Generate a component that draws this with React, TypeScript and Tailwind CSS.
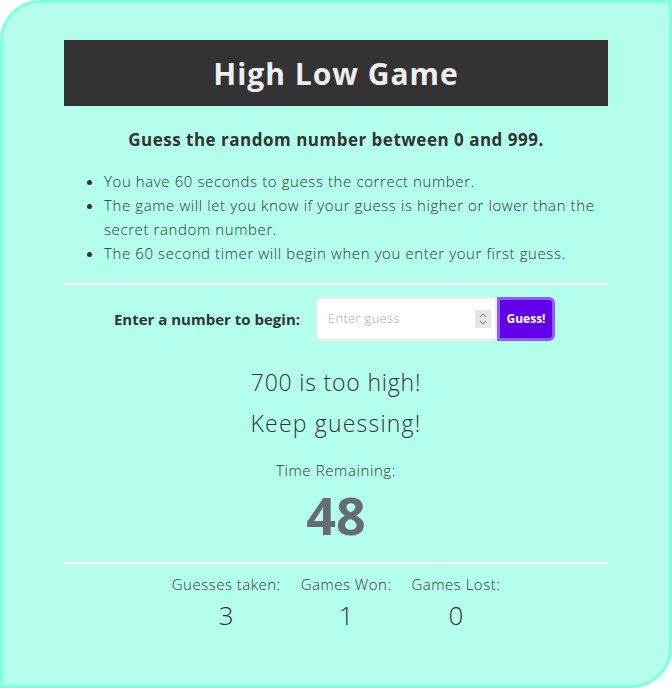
import React from 'react';

const stats = [
  { label: 'Guesses taken:', value: '3' },
  { label: 'Games Won:', value: '1' },
  { label: 'Games Lost:', value: '0' },
];

export default function App() {
  return (
    <div
      className="w-[672px] h-[688px] bg-[#b3ffec] border-[3px] border-[#80ffdf] rounded-tl-[40px] rounded-br-[40px] text-[#333333] pt-[37px]"
      style={{ fontFamily: '"Open Sans", Lato, sans-serif' }}
    >
      <div className="w-[544px] ml-[61px]">
        {/* Header */}
        <div className="h-[66px] bg-[#333333] flex items-center justify-center">
          <h1 className="text-[30px] font-bold tracking-[1px] text-[#eeeeee]">High Low Game</h1>
        </div>

        <p className="mt-[22px] text-center text-[17px] font-bold tracking-[0.5px] leading-[24px]">
          Guess the random number between 0 and 999.
        </p>

        <ul className="mt-[17px] pl-[40px] pr-[4px] list-disc text-[15px] tracking-[0.6px] leading-[24px] font-light">
          <li>You have 60 seconds to guess the correct number.</li>
          <li>The game will let you know if your guess is higher or lower than the secret random number.</li>
          <li>The 60 second timer will begin when you enter your first guess.</li>
        </ul>

        <div className="mt-[18px] h-[2px] bg-white" />

        {/* Input row */}
        <div className="mt-[12px] flex items-center justify-center">
          <label className="text-[15px] font-bold mr-[16px] ml-[-3px]">Enter a number to begin:</label>
          <div className="flex h-[44px]">
            <div className="w-[181px] bg-white border-2 border-[#eeeeee] rounded-l-[6px] flex items-center pl-[10px] pr-[4px]">
              <span className="flex-1 text-[13px] text-[#aaaaaa] font-light tracking-[0.3px]">Enter guess</span>
              <div className="w-[16px] h-[18px] bg-[#e6e6ea] flex items-center justify-center">
                <svg width="10" height="14" viewBox="0 0 10 14" fill="none" stroke="#9a9aa2" strokeWidth="1.2">
                  <path d="M2 5 L5 2 L8 5" />
                  <path d="M2 9 L5 12 L8 9" />
                </svg>
              </div>
            </div>
            <button className="w-[58px] bg-[#6200ea] border-[3px] border-[#8e5cf7] rounded-r-[6px] text-white text-[12px] font-bold">
              Guess!
            </button>
          </div>
        </div>

        {/* Feedback */}
        <div className="text-center">
          <p className="mt-[26px] text-[23px] font-light tracking-[0.8px] leading-[30px]">700 is too high!</p>
          <p className="mt-[11px] text-[23px] font-light tracking-[1.2px] leading-[30px]">Keep guessing!</p>
          <p className="mt-[23px] text-[15px] font-light tracking-[0.6px] leading-[18px]">Time Remaining:</p>
          <p className="mt-0 text-[52px] font-bold leading-[72px] text-[#666b75]">48</p>
        </div>

        <div className="mt-[11px] h-[2px] bg-white" />

        {/* Stats */}
        <div className="mt-[10px] flex justify-center gap-[20px]">
          {stats.map((s) => (
            <div key={s.label} className="text-center">
              <div className="text-[15px] font-light tracking-[0.5px] leading-[20px]">{s.label}</div>
              <div className="mt-[6px] text-[26px] font-light leading-[30px]">{s.value}</div>
            </div>
          ))}
        </div>
      </div>
    </div>
  );
}
